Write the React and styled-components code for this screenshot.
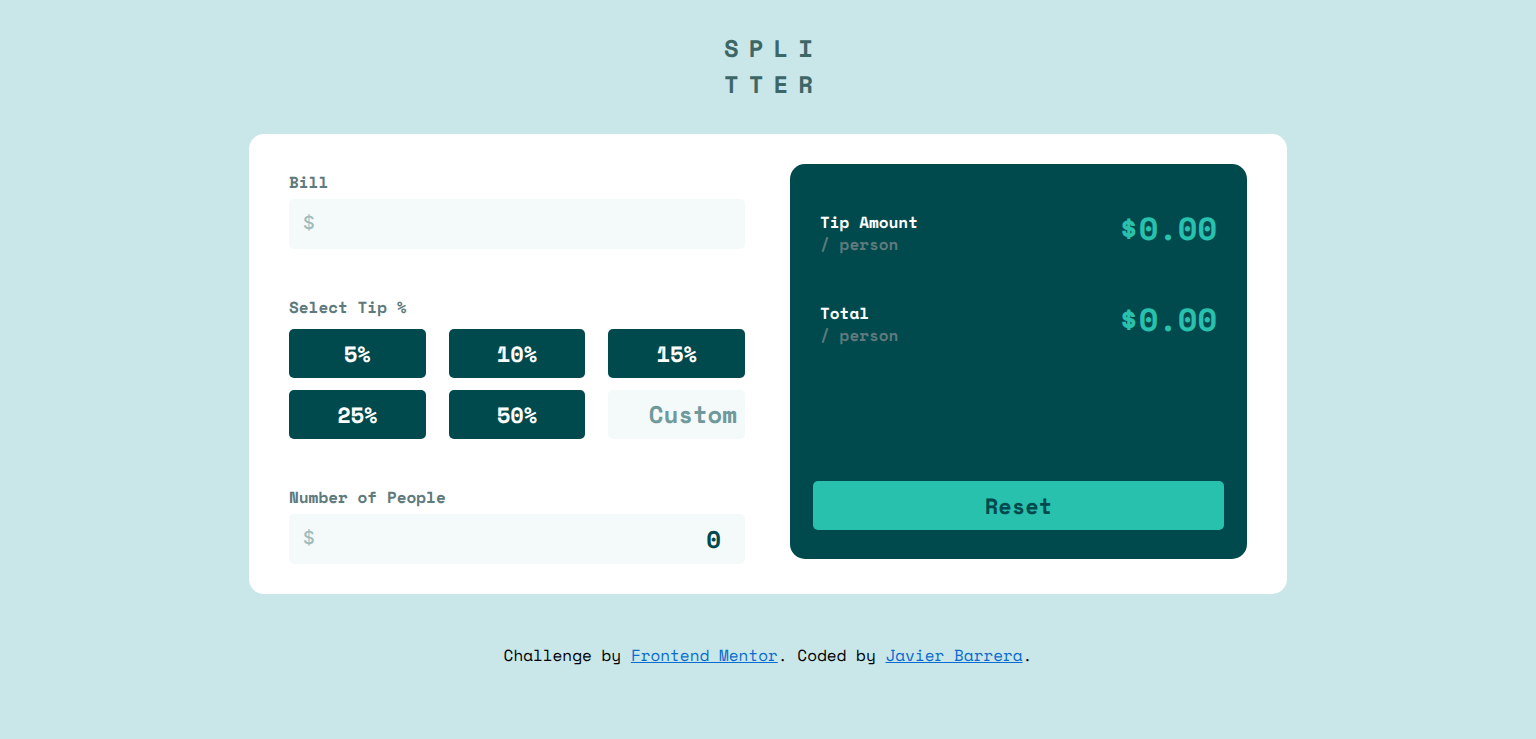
import React, { useState } from "react";
import styled, { createGlobalStyle } from "styled-components";

const colors = {
  page: "#c9e7e9",
  dark: "#00494d",
  accent: "#28c1ae",
  label: "#5e7a7d",
  logo: "#3d6666",
  field: "#f4fafa",
  placeholder: "#6f999b",
  icon: "#9ebbbd",
  link: "#0a6cd0",
};

const GlobalStyle = createGlobalStyle`
  *, *::before, *::after { box-sizing: border-box; }
  body {
    margin: 0;
    background: ${colors.page};
    color: #000;
    font-family: "Space Mono", "DejaVu Sans Mono", monospace;
    font-size: 16px;
    line-height: 24px;
    text-rendering: geometricPrecision;
  }
  button, input { font: inherit; text-rendering: inherit; }
`;

const Page = styled.div`
  display: flex;
  flex-direction: column;
  align-items: center;
  padding: 30px 24px 71px;
`;

const Logo = styled.h1`
  margin: 0;
  padding-left: 11px;
  color: ${colors.logo};
  font-size: 24px;
  line-height: 36px;
  letter-spacing: 10px;
`;

const Card = styled.main`
  display: grid;
  grid-template-columns: minmax(0, 456fr) minmax(0, 457fr);
  gap: 45px;
  width: 100%;
  max-width: 1038px;
  margin-top: 32px;
  padding: 30px 40px;
  border-radius: 15px;
  background: #fff;

  @media (max-width: 800px) {
    grid-template-columns: minmax(0, 1fr);
  }
`;

const Form = styled.form`
  display: flex;
  flex-direction: column;
  gap: 45px;
  padding-top: 5px;
`;

const Group = styled.div`
  display: flex;
  flex-direction: column;
  gap: 4px;
`;

const TipGroup = styled.fieldset`
  min-width: 0;
  margin: 0;
  padding: 0;
  border: 0;
`;

const labelText = `
  color: ${colors.label};
  font-weight: 700;
  line-height: 26px;
`;

const Label = styled.label`
  ${labelText}
`;

const Legend = styled.legend`
  ${labelText}
  padding: 0;
  margin-bottom: 9px;
`;

const Field = styled.div`
  display: flex;
  align-items: center;
  height: 50px;
  padding: 0 24px 0 14px;
  border-radius: 5px;
  background: ${colors.field};

  &:focus-within {
    box-shadow: 0 0 0 2px ${colors.accent};
  }
`;

const Currency = styled.span`
  color: ${colors.icon};
  font-family: Inter, "Liberation Sans", sans-serif;
  font-size: 18px;
  font-weight: 500;
`;

const NumberInput = styled.input`
  flex: 1;
  min-width: 0;
  padding: 0;
  border: 0;
  outline: 0;
  background: transparent;
  color: ${colors.dark};
  font-size: 24px;
  font-weight: 700;
  text-align: right;
`;

const TipGrid = styled.div`
  display: grid;
  grid-template-columns: repeat(3, minmax(0, 1fr));
  gap: 12px 23px;
`;

const Button = styled.button`
  height: 49px;
  padding: 0;
  border: 0;
  border-radius: 5px;
  background: ${(p) => (p.$accent ? colors.accent : colors.dark)};
  color: ${(p) => (p.$accent ? colors.dark : "#fff")};
  font-size: 22px;
  font-weight: 700;
  cursor: pointer;
`;

const CustomInput = styled(NumberInput)`
  width: 100%;
  height: 49px;
  padding: 0 8px 2px;
  border-radius: 5px;
  background: ${colors.field};

  &::placeholder {
    color: ${colors.placeholder};
    opacity: 1;
  }
`;

const Summary = styled.section`
  display: flex;
  flex-direction: column;
  margin-bottom: 5px;
  padding: 47px 23px 29px;
  border-radius: 15px;
  background: ${colors.dark};
`;

const Results = styled.div`
  display: flex;
  flex: 1;
  flex-direction: column;
  gap: 47px;
  padding: 0 7px;
`;

const Result = styled.div`
  display: flex;
  align-items: flex-start;
  justify-content: space-between;
`;

const ResultName = styled.h2`
  margin: 0;
  color: #fff;
  font-size: 16px;
  line-height: 22px;
`;

const PerPerson = styled.span`
  display: block;
  color: ${colors.label};
`;

const Amount = styled.output`
  color: ${colors.accent};
  font-size: 32px;
  font-weight: 700;
  line-height: 34px;
`;

const Footer = styled.footer`
  margin-top: 49px;
  text-align: center;
`;

const Link = styled.a`
  color: ${colors.link};
  text-decoration: underline;
`;

const tips = [5, 10, 15, 25, 50];

export default function App() {
  const [bill, setBill] = useState("");
  const [tip, setTip] = useState(0);
  const [custom, setCustom] = useState("");
  const [people, setPeople] = useState("0");

  const count = Number(people) || 0;
  const total = Number(bill) || 0;
  const tipShare = count > 0 ? (total * tip) / 100 / count : 0;
  const totalShare = count > 0 ? total / count + tipShare : 0;

  const reset = () => {
    setBill("");
    setTip(0);
    setCustom("");
    setPeople("0");
  };

  return (
    <>
      <GlobalStyle />
      <Page>
        <Logo>
          SPLI
          <br />
          TTER
        </Logo>
        <Card>
          <Form onSubmit={(e) => e.preventDefault()}>
            <Group>
              <Label htmlFor="bill">Bill</Label>
              <Field>
                <Currency aria-hidden="true">$</Currency>
                <NumberInput
                  id="bill"
                  inputMode="decimal"
                  value={bill}
                  onChange={(e) => setBill(e.target.value)}
                />
              </Field>
            </Group>
            <TipGroup>
              <Legend>Select Tip %</Legend>
              <TipGrid>
                {tips.map((value) => (
                  <Button key={value} type="button" onClick={() => setTip(value)}>
                    {value}%
                  </Button>
                ))}
                <CustomInput
                  aria-label="Custom tip"
                  inputMode="decimal"
                  placeholder="Custom"
                  value={custom}
                  onChange={(e) => {
                    setCustom(e.target.value);
                    setTip(Number(e.target.value) || 0);
                  }}
                />
              </TipGrid>
            </TipGroup>
            <Group>
              <Label htmlFor="people">Number of People</Label>
              <Field>
                <Currency aria-hidden="true">$</Currency>
                <NumberInput
                  id="people"
                  inputMode="numeric"
                  value={people}
                  onChange={(e) => setPeople(e.target.value)}
                />
              </Field>
            </Group>
          </Form>
          <Summary>
            <Results>
              <Result>
                <ResultName>
                  Tip Amount
                  <PerPerson>/ person</PerPerson>
                </ResultName>
                <Amount>${tipShare.toFixed(2)}</Amount>
              </Result>
              <Result>
                <ResultName>
                  Total
                  <PerPerson>/ person</PerPerson>
                </ResultName>
                <Amount>${totalShare.toFixed(2)}</Amount>
              </Result>
            </Results>
            <Button type="button" $accent onClick={reset}>
              Reset
            </Button>
          </Summary>
        </Card>
        <Footer>
          Challenge by <Link href="https://www.frontendmentor.io">Frontend Mentor</Link>. Coded by{" "}
          <Link href="#">Javier Barrera</Link>.
        </Footer>
      </Page>
    </>
  );
}
